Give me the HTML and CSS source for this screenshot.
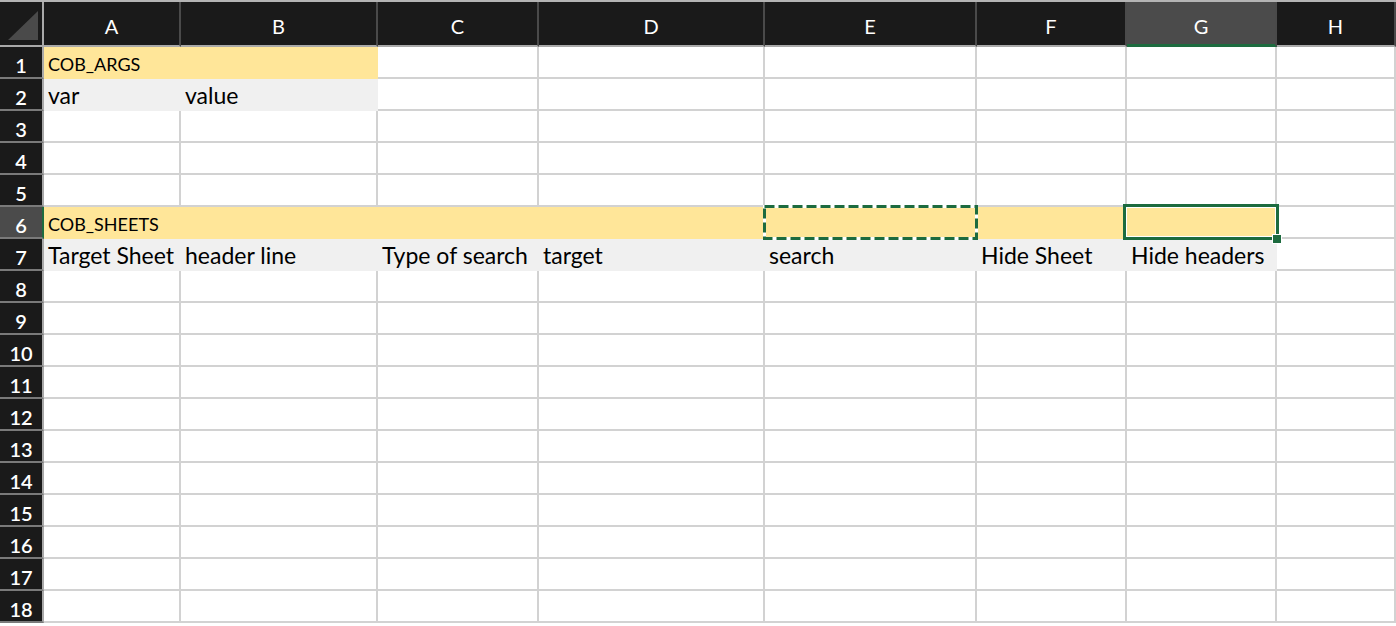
FILE: index.html
```html
<!DOCTYPE html>
<html lang="en">
<head>
    <meta charset="UTF-8">
    <meta name="viewport" content="width=device-width, initial-scale=1.0">
    <title>COB config</title>
    <link rel="stylesheet" href="styles.css">
</head>
<body>
    <table class="hoja">
        <colgroup>
            <col class="col-num">
            <col style="width: 137px">
            <col style="width: 197px">
            <col style="width: 161px">
            <col style="width: 226px">
            <col style="width: 212px">
            <col style="width: 150px">
            <col style="width: 150px">
            <col>
        </colgroup>
        <thead>
            <tr>
                <th class="esquina"><span class="triangulo"></span></th>
                <th>A</th><th>B</th><th>C</th><th>D</th><th>E</th><th>F</th>
                <th class="activa">G</th><th>H</th>
            </tr>
        </thead>
        <tbody>
            <tr><th>1</th><td class="amarillo titulo">COB_ARGS</td><td class="amarillo"></td><td></td><td></td><td></td><td></td><td></td><td></td></tr>
            <tr><th>2</th><td class="gris">var</td><td class="gris">value</td><td></td><td></td><td></td><td></td><td></td><td></td></tr>
            <tr><th>3</th><td></td><td></td><td></td><td></td><td></td><td></td><td></td><td></td></tr>
            <tr><th>4</th><td></td><td></td><td></td><td></td><td></td><td></td><td></td><td></td></tr>
            <tr><th>5</th><td></td><td></td><td></td><td></td><td></td><td></td><td></td><td></td></tr>
            <tr>
                <th class="activa">6</th>
                <td class="amarillo titulo">COB_SHEETS</td>
                <td class="amarillo"></td>
                <td class="amarillo"></td>
                <td class="amarillo"></td>
                <td class="amarillo copiada">
                    <svg class="hormigas" width="215" height="35" viewBox="0 0 215 35">
                        <rect x="1.5" y="1.5" width="212" height="32" fill="none" stroke="#fff" stroke-width="3"/>
                        <rect x="1.5" y="1.5" width="212" height="32" fill="none" stroke="#1d6b3f" stroke-width="3" stroke-dasharray="10 4"/>
                    </svg>
                </td>
                <td class="amarillo"></td>
                <td class="amarillo seleccion"><span class="marco"></span><span class="asa"></span></td>
                <td></td>
            </tr>
            <tr><th>7</th><td class="gris">Target Sheet</td><td class="gris">header line</td><td class="gris">Type of search</td><td class="gris">target</td><td class="gris">search</td><td class="gris">Hide Sheet</td><td class="gris">Hide headers</td><td></td></tr>
            <tr><th>8</th><td></td><td></td><td></td><td></td><td></td><td></td><td></td><td></td></tr>
            <tr><th>9</th><td></td><td></td><td></td><td></td><td></td><td></td><td></td><td></td></tr>
            <tr><th>10</th><td></td><td></td><td></td><td></td><td></td><td></td><td></td><td></td></tr>
            <tr><th>11</th><td></td><td></td><td></td><td></td><td></td><td></td><td></td><td></td></tr>
            <tr><th>12</th><td></td><td></td><td></td><td></td><td></td><td></td><td></td><td></td></tr>
            <tr><th>13</th><td></td><td></td><td></td><td></td><td></td><td></td><td></td><td></td></tr>
            <tr><th>14</th><td></td><td></td><td></td><td></td><td></td><td></td><td></td><td></td></tr>
            <tr><th>15</th><td></td><td></td><td></td><td></td><td></td><td></td><td></td><td></td></tr>
            <tr><th>16</th><td></td><td></td><td></td><td></td><td></td><td></td><td></td><td></td></tr>
            <tr><th>17</th><td></td><td></td><td></td><td></td><td></td><td></td><td></td><td></td></tr>
            <tr><th>18</th><td></td><td></td><td></td><td></td><td></td><td></td><td></td><td></td></tr>
        </tbody>
    </table>
</body>
</html>
```

FILE: styles.css
```css
html, body {
    overflow: hidden;
}

body {
    margin: 0;
    padding: 0;
    background-color: #fff;
    font-family: Lato, "Open Sans", sans-serif;
    color: #000;
    height: 624px;
    border-top: 2px solid #b4b4b4;
}

.hoja {
    width: 1396px;
    table-layout: fixed;
    border-collapse: separate;
    border-spacing: 0;
}

.col-num {
    width: 44px;
}

/* cabecera de columnas */
thead th {
    height: 43px;
    padding: 0;
    background-color: #1a1a1a;
    color: #fff;
    font-weight: normal;
    font-size: 20px;
    line-height: 37px;
    vertical-align: bottom;
    text-align: center;
    border-right: 2px solid #4a4a4a;
    border-bottom: 2px solid #a9a9a9;
}

thead th.activa {
    background-color: #4b4b4b;
    border-bottom-color: #1d6b3f;
    box-shadow: inset 0 -1px 0 #1d6b3f;
}

thead th.esquina {
    position: relative;
    border-right-color: #a9a9a9;
}

.triangulo {
    position: absolute;
    left: 8px;
    bottom: 5px;
    width: 0;
    height: 0;
    border-left: 30px solid transparent;
    border-bottom: 29px solid #4a4a4a;
}

/* numeros de fila */
tbody th {
    height: 30px;
    padding: 0;
    background-color: #1a1a1a;
    color: #fff;
    font-weight: 600;
    font-size: 20px;
    line-height: 24px;
    vertical-align: bottom;
    text-align: center;
    border-right: 2px solid #a9a9a9;
    border-bottom: 2px solid #7a7a7a;
}

tbody th.activa {
    background-color: #4b4b4b;
    border-right-color: #1d6b3f;
}

td {
    height: 30px;
    padding: 0 3px 0 4px;
    font-size: 23px;
    white-space: nowrap;
    overflow: visible;
    vertical-align: bottom;
    line-height: 27px;
    border-right: 2px solid #d2d2d2;
    border-bottom: 2px solid #d2d2d2;
}

td.amarillo {
    background-color: #ffe699;
    border-color: #ffe699;
}

td.gris {
    background-color: #f0f0f0;
    border-color: #f0f0f0;
}

td.titulo {
    font-size: 18px;
    line-height: 26px;
}

/* celda copiada: borde de hormigas */
td.copiada {
    position: relative;
}

.hormigas {
    position: absolute;
    left: -2px;
    top: -2px;
}

/* celda seleccionada */
td.seleccion {
    position: relative;
}

.marco {
    position: absolute;
    left: -4px;
    top: -3px;
    right: -4px;
    bottom: -3px;
    border: 3px solid #1d6b3f;
    box-shadow: inset 0 0 0 1px #fff;
}

.asa {
    position: absolute;
    right: -7px;
    bottom: -7px;
    width: 8px;
    height: 8px;
    background-color: #1d6b3f;
    border: 1px solid #fff;
}
```
